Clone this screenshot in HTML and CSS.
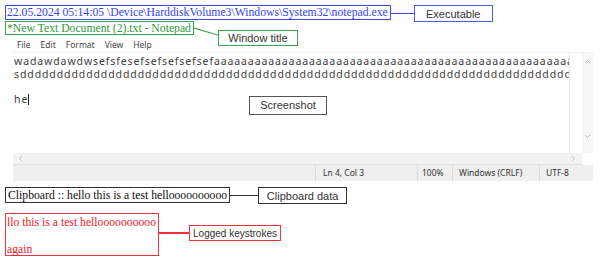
FILE: index.html
```html
<!DOCTYPE html>
<html>
<head>
<meta charset="utf-8">
<link rel="stylesheet" href="styles.css">
</head>
<body>
<div class="page">
  <div class="row row-exe">
    <div class="box box-blue">22.05.2024 05:14:05 \Device\HarddiskVolume3\Windows\System32\notepad.exe</div>
    <div class="link link-blue"></div>
    <div class="label label-blue">Executable</div>
  </div>
  <div class="row row-title">
    <div class="box box-green">*New Text Document (2).txt - Notepad</div>
    <svg class="diag" width="24" height="10" viewBox="0 0 24 10"><line x1="0" y1="1" x2="24" y2="8" stroke="#3fa34d" stroke-width="1.2"/></svg>
    <div class="label label-green">Window title</div>
  </div>
  <div class="np">
    <div class="menu"><span>File</span><span>Edit</span><span>Format</span><span>View</span><span>Help</span></div>
    <div class="editor">
      <div class="text">
        <div class="line">wadawdawdwsefsfesefsefsefsefsefaaaaaaaaaaaaaaaaaaaaaaaaaaaaaaaaaaaaaaaaaaaaaaaaaaaaaaaaaaaaaaaaaaaaaaaaaaaaaaaaaaaa</div>
        <div class="line">sddddddddddddddddddddddddddddddddddddddddddddddddddddddddddddddddddddddddddddddddddddddddddddddddddddddddddd</div>
        <div class="line">&nbsp;</div>
        <div class="line">he<span class="caret"></span></div>
        <div class="label label-dark shot">Screenshot</div>
      </div>
      <div class="vscroll">
        <svg width="7" height="5" viewBox="0 0 7 5"><polyline points="1,4 3.5,1.5 6,4" fill="none" stroke="#bbb" stroke-width="1"/></svg>
        <svg width="7" height="5" viewBox="0 0 7 5"><polyline points="1,1 3.5,3.5 6,1" fill="none" stroke="#bbb" stroke-width="1"/></svg>
      </div>
    </div>
    <div class="hscroll">
      <svg width="5" height="7" viewBox="0 0 5 7"><polyline points="4,1 1.5,3.5 4,6" fill="none" stroke="#bbb" stroke-width="1"/></svg>
      <svg width="5" height="7" viewBox="0 0 5 7"><polyline points="1,1 3.5,3.5 1,6" fill="none" stroke="#bbb" stroke-width="1"/></svg>
    </div>
    <div class="status">
      <span class="cell c0"></span>
      <span class="cell c1">Ln 4, Col 3</span>
      <span class="cell c2">100%</span>
      <span class="cell c3">Windows (CRLF)</span>
      <span class="cell c4">UTF-8</span>
    </div>
  </div>
  <div class="row row-clip">
    <div class="box box-black">Clipboard :: hello this is a test helloooooooooo</div>
    <div class="link link-black"></div>
    <div class="label label-black">Clipboard data</div>
  </div>
  <div class="row row-keys">
    <div class="box box-red">llo this is a test helloooooooooo<br><br>again</div>
    <div class="link link-red"></div>
    <div class="label label-red">Logged keystrokes</div>
  </div>
</div>
</body>
</html>
```

FILE: styles.css
```css
* { box-sizing: border-box; }
html, body { margin: 0; padding: 0; background: #ffffff; }
.page { width: 600px; height: 260px; padding: 5px 0 0 5px; overflow: hidden; position: relative; }

.row { display: flex; align-items: flex-start; }

.box {
  font-family: "Liberation Serif", serif;
  font-size: 11.7px;
  line-height: 12px;
  padding: 1px 2px 0 1px;
  white-space: nowrap;
}
.box-blue { border: 1.5px solid #3b4cf0; color: #3344ee; height: 15px; }
.box-green { border: 1.5px solid #3fa34d; color: #2f9a3c; height: 14px; }
.box-black { border: 1.5px solid #333; color: #111; height: 16px; line-height: 13px; padding-left: 2px; }
.box-red { border: 1.5px solid #f0343c; color: #f0202a; height: 43px; line-height: 13.5px; padding-top: 2px; }

.label {
  font-family: "Liberation Sans", Arial, sans-serif;
  font-size: 11px;
  color: #333;
  background: #fff;
  display: flex; align-items: center; justify-content: center;
  white-space: nowrap;
}
.label-blue { border: 1.5px solid #4a5cf0; width: 79px; height: 17px; }
.label-green { border: 1.5px solid #3fa34d; width: 80px; height: 16px; margin-top: 9px; }
.label-black { border: 1.5px solid #333; width: 89px; height: 17px; }
.label-red { border: 1.5px solid #f0343c; width: 92px; height: 16px; margin-top: 12px; font-size: 10px; }
.label-dark { border: 1.5px solid #555; width: 78px; height: 19px; }

.link { height: 1.5px; }
.link-blue { width: 23px; background: #3b4cf0; margin-top: 7.5px; }
.link-black { width: 28px; background: #333; margin-top: 7.5px; }
.link-red { width: 30px; background: #f0343c; margin-top: 19px; }

.row-exe { height: 16px; }
.row-title { height: 17px; }
.diag { margin-top: 6px; flex: none; }
.row-clip { margin-top: 6px; height: 26px; }

/* Notepad window */
.np {
  margin-left: 8px;
  width: 580px;
  font-family: "Noto Sans", "Open Sans", sans-serif;
  color: #333;
}
.menu {
  height: 14px;
  display: flex;
  gap: 10px;
  padding-left: 4px;
  font-size: 8.5px;
  line-height: 14px;
  color: #444;
}
.editor { display: flex; height: 101px; border-top: 1px solid #f2f2f2; }
.text {
  flex: 1;
  overflow: hidden;
  position: relative;
  padding: 2px 0 0 1px;
  font-size: 10.5px;
  line-height: 12.5px;
  letter-spacing: 0.9px;
  color: #404040;
  border-right: 1px solid #e8e8e8;
  margin-right: 12px;
}
.line { white-space: nowrap; height: 12.5px; overflow: hidden; width: 557px; }
.caret { display: inline-block; width: 1px; height: 11px; background: #222; vertical-align: -2px; }
.shot { position: absolute; left: 236px; top: 43px; letter-spacing: 0; }
.vscroll {
  width: 11px;
  background: #f7f7f7;
  display: flex; flex-direction: column; justify-content: space-between; align-items: center;
  padding: 6px 0 14px;
}
.hscroll {
  height: 12px;
  background: #f2f2f2;
  border-bottom: 1px solid #e0e0e0;
  display: flex; justify-content: space-between; align-items: center;
  padding: 0 6px 0 5px;
  width: 569px;
}
.status {
  height: 16px;
  background: #efefef;
  display: flex;
  font-size: 8.5px;
  line-height: 16px;
  color: #333;
}
.cell { border-left: 1px solid #dadada; padding-left: 7px; white-space: nowrap; }
.c0 { width: 302px; border-left: none; }
.c1 { width: 102px; }
.c2 { width: 35px; padding-left: 4px; }
.c3 { width: 87px; padding-left: 6px; }
.c4 { width: 54px; padding-left: 6px; }
```
